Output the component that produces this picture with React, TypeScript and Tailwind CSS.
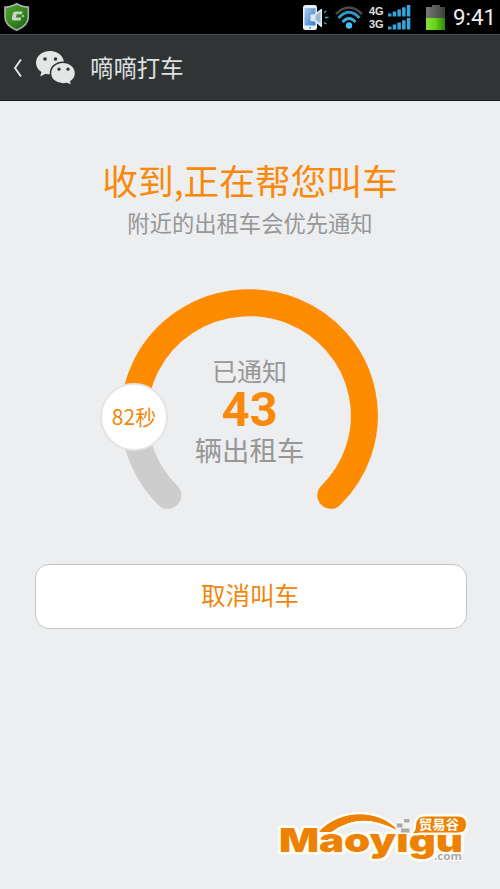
import React from "react";

const Shield = () => (
  <svg className="ml-[3px] mt-[2px] h-[30px] w-[28px]" viewBox="0 0 28 30">
    <defs>
      <linearGradient id="shield" x1="0" y1="0" x2="1" y2="1">
        <stop offset="0" stopColor="#4ea530" />
        <stop offset="0.5" stopColor="#36891d" />
        <stop offset="1" stopColor="#155d10" />
      </linearGradient>
    </defs>
    <path d="M13.700 1.800C17 4 21 5 25.300 5.200V15c0 6.500-5 10.500-11.600 13.200C7 25.500 2 21.500 2 15V5.200C6.300 5 10.400 4 13.700 1.800Z" fill="url(#shield)" stroke="#a9ada9" strokeWidth="1.700" />
    <path d="M19.500 9.500h-7.200q-2 0-2.400 2l-1 4.300q-.5 2.700 1.800 2.700h6.800l.7-3h-5.300l.8-3.200h5.200Z" fill="#c9d2c6" />
    <path d="M20 12.500l1.500 1.500-1.500 1.500-1.500-1.500Z" fill="#a5dc8b" />
  </svg>
);

const PhoneSound = () => (
  <svg className="h-[27px] w-[28px]" viewBox="0 0 28 27">
    <defs>
      <linearGradient id="screen" x1="0" y1="0" x2="1" y2="1">
        <stop offset="0" stopColor="#a9cdf2" />
        <stop offset="1" stopColor="#367ac5" />
      </linearGradient>
    </defs>
    <rect x="2" y="1" width="14" height="25" rx="2.500" fill="#e8f0f8" />
    <rect x="3.500" y="4" width="11" height="17.500" fill="url(#screen)" />
    <circle cx="9" cy="23.700" r="1" fill="#7590af" />
    <path d="M9.500 10.500q2.500 0 4-.5l6.500-5h1v18h-1L13.500 17.500q-1.500-.5-4-.5Z" fill="#dce8f3" />
    <path d="M14.500 11.500l5-4v12l-5-3.500Z" fill="#9bb8d3" />
    <path d="M23 8.500l2.500-1.500M24 13.500h3.500M23 18.500l2.500 1.500" stroke="#49a9cd" strokeWidth="1.300" />
  </svg>
);

const Wifi = () => (
  <svg className="ml-[5px] h-[26px] w-[30px]" viewBox="0 0 30 26" fill="none">
    <path d="M2 10Q15-3 28 10" stroke="#484b4d" strokeWidth="2.500" />
    <path d="M4.500 14Q15 2.500 25.500 14" stroke="#2d9bca" strokeWidth="2.800" />
    <path d="M8.500 18Q15 11 21.500 18" stroke="#38ace0" strokeWidth="2.800" />
    <circle cx="15" cy="21.500" r="3.200" fill="#48bdf1" />
  </svg>
);

const Bars = () => (
  <svg className="h-[12px] w-[23px]" viewBox="0 0 23 12" fill="#36a5dc">
    <rect x="0" y="8.500" width="3.500" height="3" />
    <rect x="4.700" y="6.500" width="3.500" height="5" />
    <rect x="9.400" y="4.500" width="3.500" height="7" />
    <rect x="14.100" y="2.300" width="3.500" height="9.200" />
    <rect x="18.800" y="0" width="3.500" height="11.500" />
  </svg>
);

const Battery = () => (
  <svg className="ml-[14px] h-[27px] w-[21px]" viewBox="0 0 21 27">
    <defs>
      <linearGradient id="charge">
        <stop offset="0" stopColor="#89df3d" />
        <stop offset=".5" stopColor="#65d313" />
        <stop offset="1" stopColor="#2c8809" />
      </linearGradient>
      <linearGradient id="shell">
        <stop offset="0" stopColor="#777a74" />
        <stop offset="1" stopColor="#3d403c" />
      </linearGradient>
    </defs>
    <path d="M7 1h8v2h5v11H1V3h6Z" fill="url(#shell)" />
    <rect x="1" y="14" width="19" height="12" fill="url(#charge)" />
  </svg>
);

const Chats = () => (
  <svg className="ml-[12px] h-[36px] w-[42px]" viewBox="0 0 42 36">
    <path d="M15 1C6.800 1 1 6.200 1 12.800c0 4 2 7.100 5.500 9.300l-1.300 4.500 5.300-2.900c1.500.4 3 .6 4.500.6 8 0 14-5 14-11.500S23 1 15 1Z" fill="#e4e5e5" />
    <circle cx="10" cy="9" r="1.800" fill="#303435" />
    <circle cx="20.500" cy="9" r="1.800" fill="#303435" />
    <path d="M28 12.200c-7 0-12.500 4.800-12.500 11S21 34 28 34c1.400 0 2.700-.2 4-.5l5 2.300-1.200-4.300c3-2 4.700-4.800 4.700-8.300 0-6.200-5.500-11-12.500-11Z" fill="#e4e5e5" stroke="#303435" strokeWidth="1.500" />
    <circle cx="24" cy="19.200" r="1.600" fill="#303435" />
    <circle cx="33" cy="19.200" r="1.600" fill="#303435" />
  </svg>
);

const Gauge = () => (
  <div className="relative ml-[100px] mt-[45px] h-[234px] w-[300px]">
    <svg className="block h-full w-full" viewBox="99.500 281 300 234" fill="none" strokeWidth="27" strokeLinecap="round">
      <path d="M133.700 415.600A115.100 112.900 0 0 0 167.300 495.300" stroke="#cdcdcd" />
      <path d="M133.700 415.600A115.100 112.900 0 1 1 330.300 495.300" stroke="#ff8c00" />
    </svg>
    <div className="absolute left-0 top-[102px] flex h-[68px] w-[68px] items-center justify-center rounded-full border-[2.500px] border-[#e4e4e5] bg-white pb-[2px] text-[21px] leading-none text-[#f1860c]">
      82秒
    </div>
    <div className="absolute left-[80px] top-[73px] flex w-[139px] flex-col items-center text-[#979797]">
      <span className="text-[25px] leading-[32px]">已通知</span>
      <strong className="font-['Roboto'] text-[49px] font-bold leading-[47px] text-[#fa890b]">43</strong>
      <span className="whitespace-nowrap text-[27.400px] leading-[32px]">辆出租车</span>
    </div>
  </div>
);

const Logo = () => (
  <svg className="absolute left-[272px] top-[808px] h-[66px] w-[204px]" viewBox="272 808 204 66">
    <g stroke="#fffdf3" strokeWidth="5" strokeLinejoin="round" paintOrder="stroke" fill="#ed8202">
      <path d="M319 832C338 810 378 808 397 830Q360 810 331 832Z" />
      <text x="279" y="852" textLength="184" lengthAdjust="spacingAndGlyphs" className="font-['Inter'] text-[33px] font-black">Maoyigu</text>
      <path d="M413 833q3-2 3-7 0-9.500 9-9.500h33q8 0 8 8t-8 8h-38q-2 .5-7 .5Z" />
    </g>
    <path d="M319 832C338 810 378 808 397 830Q360 810 331 832Z" fill="#ed8202" />
    <path d="M396 818h16v15h-16Z" fill="#f3f3f1" />
    <path d="M404 819h5.500v3.500H404ZM397 823.500h5.500v4H397ZM401 828.500h8.500v4H401Z" fill="#aaa" />
    <text x="419" y="829" textLength="40" lengthAdjust="spacingAndGlyphs" fill="#fff" className="font-['Noto_Sans_CJK_SC'] text-[13px] font-bold">贸易谷</text>
    <text x="434" y="860" textLength="28" lengthAdjust="spacingAndGlyphs" fill="#aaa" stroke="#fff" strokeWidth="2" paintOrder="stroke" className="font-['Open_Sans'] text-[10px] font-bold">.com</text>
  </svg>
);

export default function App() {
  return (
    <main className="relative h-[889px] w-[500px] overflow-hidden bg-[#edeef0] font-['Noto_Sans_CJK_SC',sans-serif]">
      <div className="flex h-[34px] bg-black">
        <Shield />
        <div className="ml-auto mr-[4px] flex h-full items-center">
          <PhoneSound />
          <Wifi />
          <div className="ml-[5px] flex flex-col gap-px">
            {["4G", "3G"].map((name) => (
              <div key={name} className="flex h-[12px] items-center gap-[3px]">
                <span className="w-[16px] font-['Liberation_Sans'] text-[11px] font-bold leading-[12px] text-[#e0e0e0]">{name}</span>
                <Bars />
              </div>
            ))}
          </div>
          <Battery />
          <span className="ml-[7px] mt-px font-['Roboto'] text-[22.300px] leading-none text-[#eee]">9:41</span>
        </div>
      </div>
      <header className="flex h-[67px] items-center border-b border-t border-b-[#17191a] border-t-[#454a4c] bg-[#303435]">
        <svg className="ml-[13px] h-[20px] w-[10px]" viewBox="0 0 10 20" fill="none" stroke="#e0e1e1" strokeWidth="2">
          <path d="M8 1.500L2 10L8 18.500" />
        </svg>
        <Chats />
        <h1 className="ml-[13px] text-[23.400px] leading-none text-[#dfe0e0]">嘀嘀打车</h1>
      </header>
      <h2 className="mt-[53px] text-center text-[35.700px] leading-[52px] text-[#fa890b]">收到,正在帮您叫车</h2>
      <p className="text-center text-[22.300px] leading-[32px] text-[#979797]">附近的出租车会优先通知</p>
      <div className="-mt-[2px]">
        <Gauge />
      </div>
      <button className="ml-[35px] mt-[49px] flex h-[65px] w-[432px] items-center justify-center rounded-[14px] border border-[#c4c5c7] bg-white pb-[2px] pr-[2px] text-[24.500px] leading-none text-[#f1860c]">取消叫车</button>
      <Logo />
    </main>
  );
}
